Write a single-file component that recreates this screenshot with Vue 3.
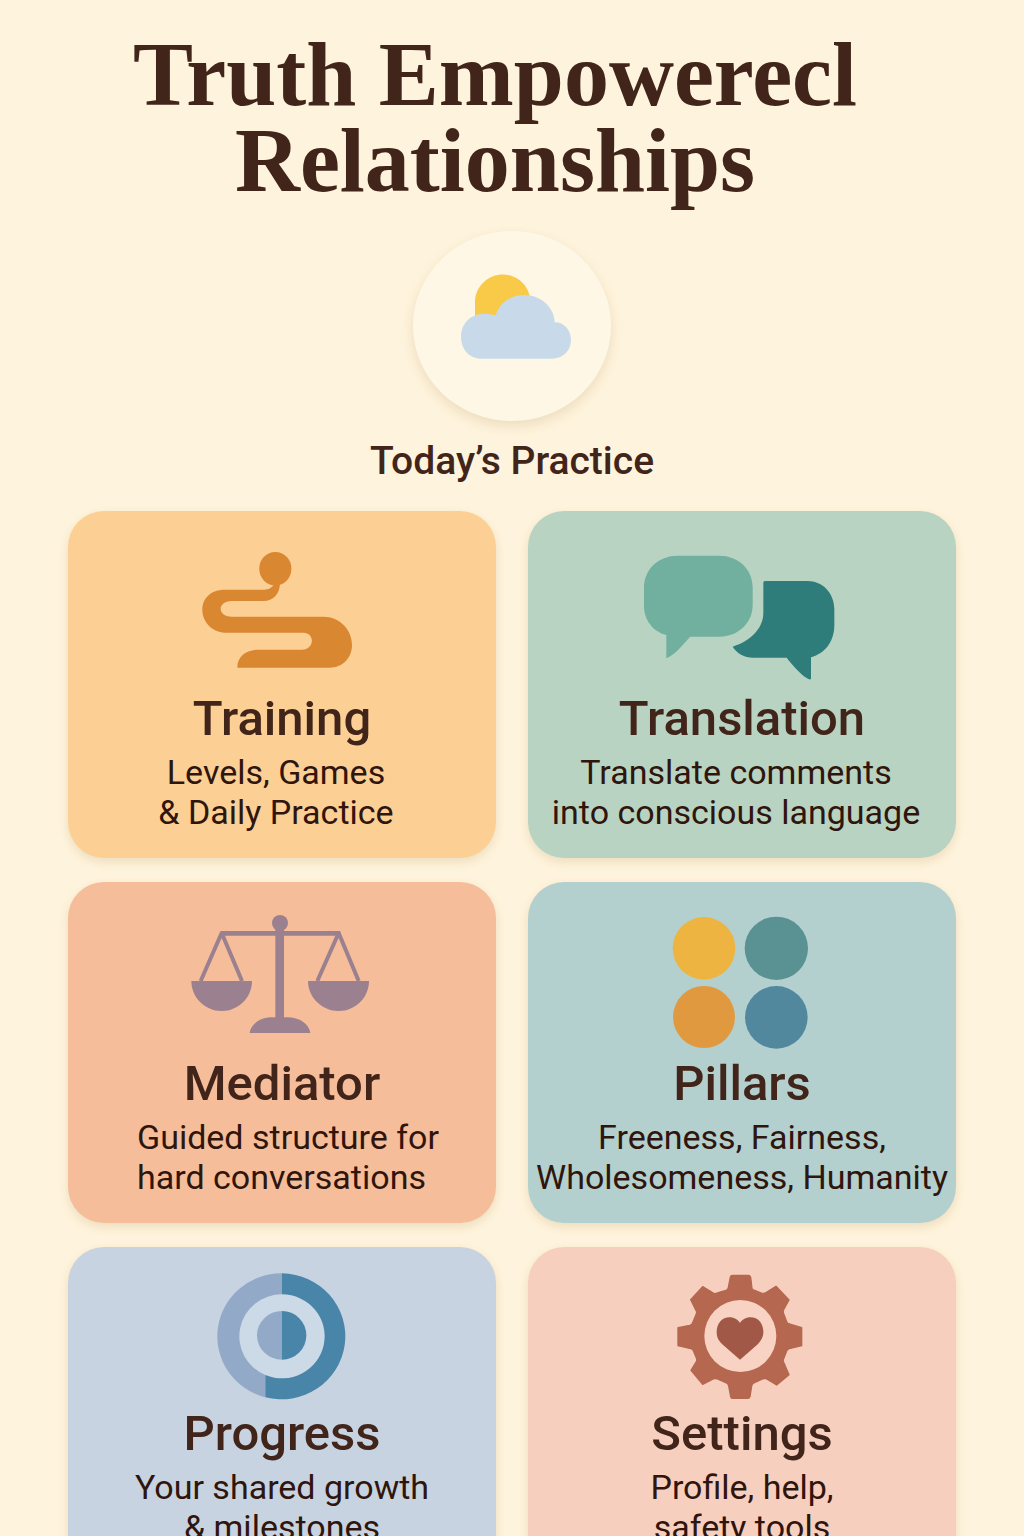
<script setup>
const cards = [
  { id: 'training', title: 'Training', lines: ['Levels, Games', '& Daily Practice'], box: '366 33 600 540' },
  { id: 'translation', title: 'Translation', lines: ['Translate comments', 'into conscious language'], box: '366 33 600 540' },
  { id: 'mediator', title: 'Mediator', lines: ['Guided structure for', 'hard conversations'], box: '6 -54 600 522' },
  { id: 'pillars', title: 'Pillars', lines: ['Freeness, Fairness,', 'Wholesomeness, Humanity'], box: '-24 -54 600 522' },
  { id: 'progress', title: 'Progress', lines: ['Your shared growth', '& milestones'], box: '-54 -39 600 477' },
  { id: 'settings', title: 'Settings', lines: ['Profile, help,', 'safety tools'], box: '-54 -39 600 477' },
]
</script>

<template>
  <main class="page">
    <h1 class="brand">Truth Empowerecl<br />Relationships</h1>

    <a class="today" href="#today">
      <span class="badge">
        <svg viewBox="39 33 594 570" aria-hidden="true">
          <path fill="#f8ca47" d="M225 300V253A83 83 0 0 1 391 240V300Z" />
          <path
            fill="#c8daea"
            d="M246 416C206 416 183 386 183 350C183 306 220 267 287 286C299 247 334 225 373 225C424 225 464 264 464 307C491 306 513 329 513 360C513 392 490 416 455 416Z"
          />
        </svg>
      </span>
      <span class="today-label">Today’s Practice</span>
    </a>

    <nav class="grid" aria-label="Sections">
      <a v-for="card in cards" :key="card.id" :class="['card', card.id]" :href="'#' + card.id">
        <svg class="icon" :viewBox="card.box" aria-hidden="true">
          <g v-if="card.id === 'training'" fill="#d98731">
            <rect x="598" y="156" width="96" height="100" rx="48" />
            <path
              d="M642 252C636 264 626 269 612 269H495C452 269 427 295 427 329C427 366 457 398 500 398H730C765 398 765 449 725 449H598C560 449 532 468 532 503H808C850 503 876 472 876 435C876 390 840 350 790 350H515C471 350 471 303 515 303H610C640 303 658 282 660 252Z"
            />
          </g>
          <g v-else-if="card.id === 'translation'">
            <path
              fill="#71af9f"
              d="M472 167H598C655 167 698 208 698 262V315C698 368 655 410 598 410H510C486 438 464 464 439 475V405C400 395 372 361 372 318V262C372 208 416 167 472 167Z"
            />
            <path
              fill="#2e7d7b"
              d="M735 243H862C909 243 943 280 943 328V375C943 425 915 460 873 472V537Q869 541 860 534C838 520 818 496 800 473H700C672 473 651 460 638 440C686 426 730 388 730 340V248Q730 243 735 243Z"
            />
          </g>
          <g v-else-if="card.id === 'mediator'" fill="#9b8090">
            <circle cx="300" cy="69" r="24" />
            <path d="M286 85H312V352H322C358 352 388 372 391 399H209C212 372 242 352 276 352H286Z" />
            <path d="M121 93H481V107H121Z" />
            <path d="M34 243H216C216 292 176 333 125 333S34 292 34 243Z" />
            <path d="M384 243H567C567 292 527 333 476 333S384 292 384 243Z" />
            <path
              fill="none"
              stroke="#9b8090"
              stroke-width="12"
              stroke-linejoin="bevel"
              d="M62 243L125 99L186 243M412 243L476 99L536 243"
            />
          </g>
          <g v-else-if="card.id === 'pillars'">
            <circle cx="162" cy="145" r="94" fill="#edb441" />
            <circle cx="379" cy="145" r="95" fill="#5a9192" />
            <circle cx="162" cy="351" r="93" fill="#e1993f" />
            <circle cx="379" cy="352" r="94" fill="#51889e" />
          </g>
          <g v-else-if="card.id === 'progress'">
            <ellipse cx="246" cy="229" rx="130" ry="128" fill="#ccd9e6" />
            <path fill="#92aac7" d="M246 40A192 189 0 0 0 196 412V345A128 126 0 0 1 246 103Z" />
            <path fill="#4885a8" d="M246 40A192 189 0 1 1 196 412V345A128 126 0 1 0 246 103Z" />
            <path fill="#92aac7" d="M246 153A75 73 0 0 0 246 299Z" />
            <path fill="#4885a8" d="M246 153A73 73 0 0 1 246 299Z" />
          </g>
          <g v-else>
            <path
              fill="#b5674f"
              stroke="#b5674f"
              stroke-width="4"
              stroke-linejoin="round"
              d="M217 46H266Q271 46 272 52L276 86Q279 90 284 91L304 99Q312 102 318 98L348 79L387 120L371 149Q368 155 371 161L380 185Q382 191 388 192L425 203V257L388 266Q382 268 380 273L371 296Q368 302 371 307L387 344L350 375L320 357Q314 354 308 357L282 369Q276 372 275 378L270 410Q268 415 264 415H217Q213 415 212 410L206 378Q205 372 199 369L172 357Q166 354 160 357L128 373L93 331L109 305Q112 300 109 294L100 272Q98 267 92 266L54 257V203L89 196Q96 194 98 188L109 161Q111 156 108 151L92 119L128 80L160 99Q166 102 172 99L198 91Q204 89 205 83L211 51Q212 46 217 46Z"
            />
            <circle cx="241" cy="228" r="108" fill="#f8d2c2" />
            <path
              fill="#a15846"
              d="M240 299L186 252C174 240 170 230 170 216C170 190 187 172 208 172C224 172 234 180 240 189C246 180 256 172 272 172C294 172 310 190 310 216C310 230 305 240 294 252Z"
            />
          </g>
        </svg>
        <h2 class="title">{{ card.title }}</h2>
        <p class="desc">{{ card.lines[0] }}<br />{{ card.lines[1] }}</p>
      </a>
    </nav>
  </main>
</template>

<style>
body {
  margin: 0;
  background: #fef3dc;
}
</style>

<style scoped>
.page {
  box-sizing: border-box;
  padding: 32px 68px 48px;
  font-family: Roboto, "Liberation Sans", sans-serif;
  color: #42251a;
}

.brand {
  margin: 0;
  padding-right: 34px;
  font: 700 90px/86px "Liberation Serif", serif;
  text-align: center;
}

.today {
  display: flex;
  flex-direction: column;
  align-items: center;
  gap: 16px;
  margin: 27px 0 26px;
  color: inherit;
  text-decoration: none;
}

.badge {
  width: 198px;
  height: 190px;
  border-radius: 50%;
  background: #fff7e5;
  box-shadow: 0 5px 12px rgba(150, 110, 40, 0.16);
}

.badge svg {
  display: block;
  width: 100%;
  height: 100%;
}

.today-label {
  font-size: 39px;
  line-height: 48px;
  font-weight: 500;
}

.grid {
  display: grid;
  grid-template-columns: 1fr 1fr;
  gap: 24px 32px;
}

.card {
  display: flex;
  flex-direction: column;
  align-items: center;
  padding-bottom: 26px;
  border-radius: 36px;
  box-shadow: 0 4px 10px rgba(150, 110, 40, 0.16);
  color: inherit;
  text-decoration: none;
}

.icon {
  width: 200px;
}

.title {
  margin: 0 0 5px;
  font-size: 49px;
  line-height: 56px;
  font-weight: 500;
}

.desc {
  margin: 0;
  font-size: 34px;
  line-height: 40px;
  text-align: center;
  white-space: nowrap;
  color: #2f150c;
}

.training { background: #fccf94; }
.translation { background: #b8d3c1; }
.mediator { background: #f5bd9a; }
.pillars { background: #b3d0cf; }
.progress { background: #c7d3e0; }
.settings { background: #f6cfbf; }

.training .desc,
.translation .desc {
  padding-right: 12px;
}

.mediator .desc {
  padding-left: 12px;
  text-align: left;
}
</style>
